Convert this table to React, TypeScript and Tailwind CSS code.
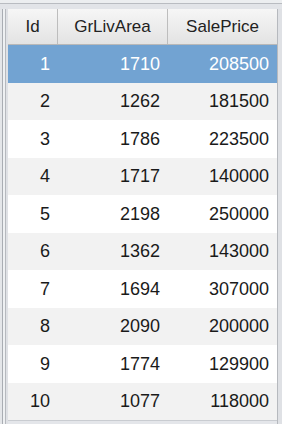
import React from 'react';

interface Row {
  id: number;
  area: number;
  price: number;
}

const rows: Row[] = [
  { id: 1, area: 1710, price: 208500 },
  { id: 2, area: 1262, price: 181500 },
  { id: 3, area: 1786, price: 223500 },
  { id: 4, area: 1717, price: 140000 },
  { id: 5, area: 2198, price: 250000 },
  { id: 6, area: 1362, price: 143000 },
  { id: 7, area: 1694, price: 307000 },
  { id: 8, area: 2090, price: 200000 },
  { id: 9, area: 1774, price: 129900 },
  { id: 10, area: 1077, price: 118000 },
];

const selectedId = 1;

export default function App() {
  return (
    <div
      className="w-[282px] h-[424px] bg-[#dadde2] flex flex-col overflow-hidden"
      style={{ fontFamily: '"Liberation Sans", Arial, sans-serif' }}
    >
      {/* top frame strip */}
      <div className="h-[9px] flex flex-col shrink-0">
        <div className="h-[3px] bg-[#eceef0]" />
        <div className="h-px bg-[#b9bcc1]" />
        <div className="flex-1 bg-[#e2e4e8]" />
      </div>
      <div className="flex flex-1 min-h-0">
        {/* left frame */}
        <div className="w-[8px] flex shrink-0">
          <div className="w-[2px] bg-[#e4e6e9]" />
          <div className="w-px bg-[#a9adb3]" />
          <div className="w-[2px] bg-[#eef0f2]" />
          <div className="w-px bg-[#b6b9be]" />
          <div className="flex-1 bg-[#dfe1e5]" />
        </div>
        <div className="w-[269px] flex flex-col shrink-0">
          {/* header */}
          <div className="h-[36px] flex bg-gradient-to-b from-[#f6f6f6] to-[#e3e3e3] border-b border-[#b8b8b8] text-[17px] text-[#222]">
            <div className="w-[50px] flex items-center justify-center border-r border-[#bdbdbd]">Id</div>
            <div className="w-[110px] flex items-center justify-center border-r border-[#bdbdbd]">GrLivArea</div>
            <div className="w-[109px] flex items-center justify-center">SalePrice</div>
          </div>
          {rows.map((r, i) => {
            const sel = r.id === selectedId;
            const bg = sel ? 'bg-[#72a3d2] text-white' : i % 2 === 1 ? 'bg-[#f2f2f2] text-[#1a1a1a]' : 'bg-white text-[#1a1a1a]';
            const h = i % 2 === 0 ? 'h-[38px]' : 'h-[37px]';
            return (
              <div key={r.id} className={`${h} flex items-center text-[18px] ${bg}`}>
                <div className="w-[50px] text-right pr-[8px]">{r.id}</div>
                <div className="w-[110px] text-right pr-[8px]">{r.area}</div>
                <div className="w-[109px] text-right pr-[8px]">{r.price}</div>
              </div>
            );
          })}
          <div className="flex-1 bg-[#e4e6ea] border-t border-[#c9ccd1]" />
        </div>
        {/* right frame */}
        <div className="flex-1 flex">
          <div className="w-px bg-[#b6b9be]" />
          <div className="flex-1 bg-[#dfe1e5]" />
        </div>
      </div>
    </div>
  );
}
